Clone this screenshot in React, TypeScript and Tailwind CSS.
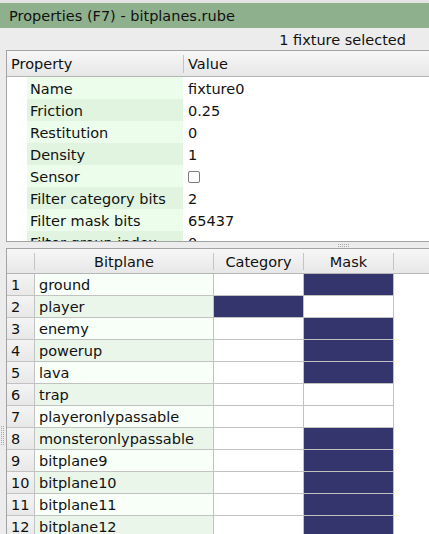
import React from "react";

const props: { name: string; value: React.ReactNode }[] = [
  { name: "Name", value: "fixture0" },
  { name: "Friction", value: "0.25" },
  { name: "Restitution", value: "0" },
  { name: "Density", value: "1" },
  {
    name: "Sensor",
    value: <span className="block w-[12px] h-[12px] border border-[#7a7a7a] rounded-[2px] bg-white" />,
  },
  { name: "Filter category bits", value: "2" },
  { name: "Filter mask bits", value: "65437" },
  { name: "Filter group index", value: "0" },
];

const planes = [
  "ground",
  "player",
  "enemy",
  "powerup",
  "lava",
  "trap",
  "playeronlypassable",
  "monsteronlypassable",
  "bitplane9",
  "bitplane10",
  "bitplane11",
  "bitplane12",
];

const category = 2;
const mask = 65437;

function Dots() {
  return (
    <div className="grid grid-cols-6 gap-x-[1px] gap-y-[1px]">
      {Array.from({ length: 12 }).map((_, i) => (
        <span key={i} className="block w-[1px] h-[1px] bg-[#a8a8a8]" />
      ))}
    </div>
  );
}

export default function App() {
  return (
    <div
      className="relative w-[429px] h-[534px] overflow-hidden bg-[#ececec] text-[#111] text-[14.5px] leading-none"
      style={{ fontFamily: '"DejaVu Sans", Verdana, sans-serif' }}
    >
      {/* title bar */}
      <div className="h-[3px] bg-[#e4e4e4]" />
      <div className="h-[25px] bg-[#8fb08d] flex items-center pl-[9px] pt-[1px] text-[#111]">
        Properties (F7) - bitplanes.rube
      </div>

      {/* selection info */}
      <div className="h-[22px] flex items-center justify-end pr-[23px] pt-[2px]">1 fixture selected</div>

      {/* properties panel */}
      <div className="ml-[6px] w-[440px] h-[192px] border border-[#a3a3a3] bg-white overflow-hidden flex flex-col">
        <div className="h-[26px] shrink-0 flex items-center border-b border-[#b5b5b5] bg-gradient-to-b from-[#f7f7f7] to-[#e7e7e7]">
          <div className="w-[176px] pl-[4px] pt-[2px] flex items-center">Property</div>
          <div className="w-[1px] h-[18px] bg-[#c4c4c4]" />
          <div className="pl-[4px] pt-[2px]">Value</div>
        </div>
        <div className="flex flex-col">
          {props.map((p, i) => (
            <div key={p.name} className="h-[22px] shrink-0 flex">
              <div className="w-[20px] bg-white" />
              <div
                className={`w-[156px] flex items-center pl-[3px] pt-[2px] ${i % 2 === 0 ? "bg-[#ecfdec]" : "bg-[#e0f4e0]"}`}
              >
                {p.name}
              </div>
              <div className="flex items-center pl-[5px] pt-[2px] bg-white">{p.value}</div>
            </div>
          ))}
        </div>
      </div>

      {/* splitter */}
      <div className="h-[6px] flex items-center justify-center pl-[257px]">
        <Dots />
      </div>

      {/* bitplanes table */}
      <div className="ml-[6px] w-[440px] h-[300px] border-t border-l border-[#a3a3a3] bg-white flex flex-col">
        <div className="h-[25px] shrink-0 flex border-b border-[#b5b5b5] bg-gradient-to-b from-[#f7f7f7] to-[#e7e7e7]">
          <div className="w-[28px] flex items-center justify-end">
            <div className="w-[1px] h-[17px] bg-[#c4c4c4]" />
          </div>
          <div className="w-[179px] flex items-center">
            <div className="flex-1 text-center pt-[2px]">Bitplane</div>
            <div className="w-[1px] h-[17px] bg-[#c4c4c4]" />
          </div>
          <div className="w-[90px] flex items-center">
            <div className="flex-1 text-center pt-[2px]">Category</div>
            <div className="w-[1px] h-[17px] bg-[#c4c4c4]" />
          </div>
          <div className="w-[90px] flex items-center">
            <div className="flex-1 text-center pt-[2px]">Mask</div>
            <div className="w-[1px] h-[17px] bg-[#c4c4c4]" />
          </div>
          <div className="flex-1" />
        </div>
        {planes.map((name, i) => {
          const cat = (category >> i) & 1;
          const msk = (mask >> i) & 1;
          return (
            <div key={name} className="h-[22px] shrink-0 flex">
              <div className="w-[28px] flex items-center pl-[4px] pt-[2px] border-b border-r border-[#c2c2c2] bg-gradient-to-b from-[#f4f4f4] to-[#e8e8e8]">
                {i + 1}
              </div>
              <div
                className={`w-[179px] flex items-center pl-[4px] pt-[2px] border-b border-r border-[#c2c2c2] ${i % 2 === 0 ? "bg-[#f8fff8]" : "bg-[#ebf6eb]"}`}
              >
                {name}
              </div>
              <div
                className={`w-[90px] border-b border-r border-[#c2c2c2] ${cat ? "bg-[#35356e]" : "bg-white"}`}
              />
              <div
                className={`w-[90px] border-b border-r border-[#c2c2c2] ${msk ? "bg-[#35356e]" : "bg-white"}`}
              />
              <div className="flex-1 bg-white" />
            </div>
          );
        })}
      </div>

      {/* left dock splitter handle */}
      <div className="absolute left-[1px] top-[426px] flex flex-col gap-[1px]">
        {Array.from({ length: 10 }).map((_, i) => (
          <div key={i} className="flex gap-[1px]">
            <span className="block w-[1px] h-[1px] bg-[#a8a8a8]" />
            <span className="block w-[1px] h-[1px] bg-[#a8a8a8]" />
          </div>
        ))}
      </div>
    </div>
  );
}
